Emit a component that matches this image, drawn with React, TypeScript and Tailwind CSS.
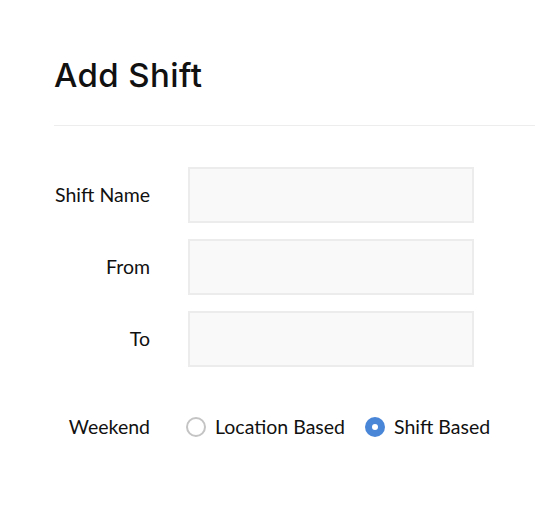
export default function App() {
    const fields = ['Shift Name', 'From', 'To']

    return (
        <section className="w-[535px] h-[521px] bg-white" style={{ fontFamily: 'Lato, sans-serif' }}>
            <header className="ml-[54px] pt-[55px] pb-[30px] border-b border-[#ededed]">
                <h1 className="text-[33px] leading-[40px] font-medium text-[#111] tracking-[0.4px]" style={{ fontFamily: 'Inter, sans-serif' }}>
                    Add Shift
                </h1>
            </header>

            <div className="flex flex-col gap-[16px] pt-[41px]">
                {fields.map((label) => (
                    <div key={label} className="flex items-center">
                        <label className="w-[150px] text-right text-[19.5px] text-[#111]">{label}</label>
                        <input type="text" className="ml-[38px] w-[286px] h-[56px] bg-[#f9f9f9] border-2 border-[#ececec] outline-none" />
                    </div>
                ))}
            </div>

            <div className="flex items-center mt-[45px]">
                <span className="w-[150px] text-right text-[19.5px] text-[#111]">Weekend</span>
                <label className="ml-[36px] flex items-center gap-[9px] text-[19.5px] text-[#111]">
                    <span className="w-[20px] h-[20px] rounded-full border-2 border-[#c4c4c4] bg-white" />
                    Location Based
                </label>
                <label className="ml-[20px] flex items-center gap-[9px] text-[19.5px] text-[#111]">
                    <span className="w-[20px] h-[20px] rounded-full bg-[#4a86d8] flex items-center justify-center">
                        <span className="w-[6px] h-[6px] rounded-full bg-white" />
                    </span>
                    Shift Based
                </label>
            </div>
        </section>
    )
}
